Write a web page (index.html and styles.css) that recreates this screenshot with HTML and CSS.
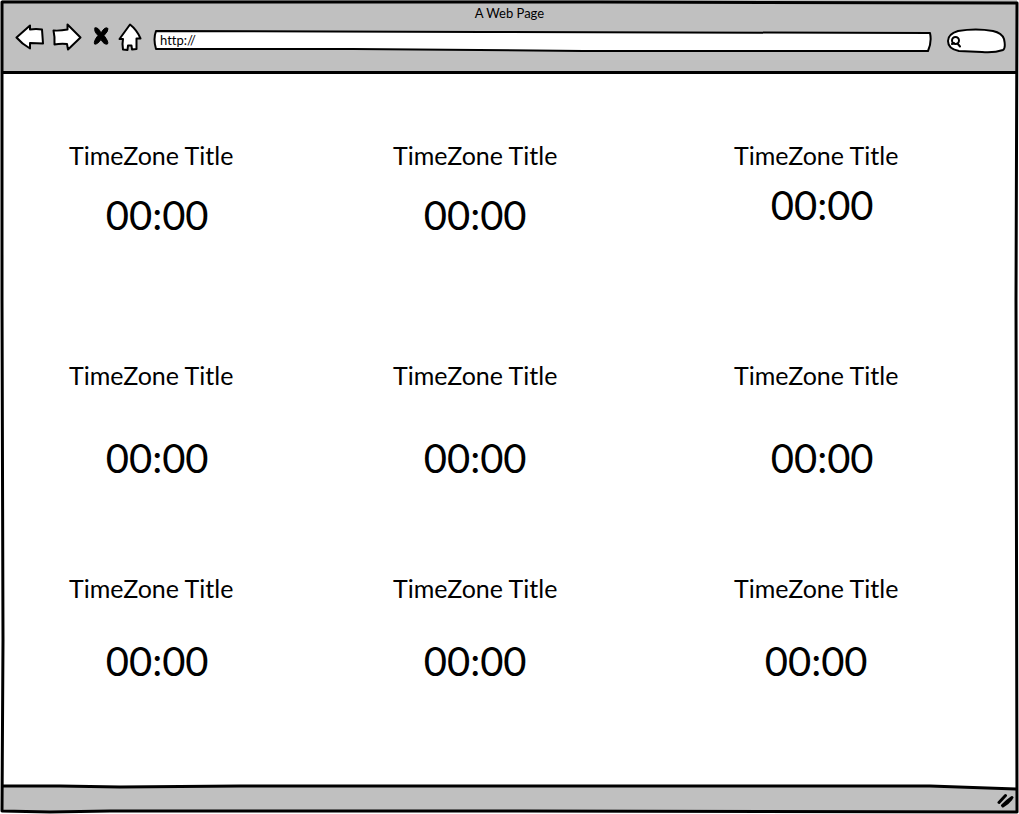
FILE: index.html
```html
<!DOCTYPE html>
<html lang="en">
<head>
<meta charset="utf-8">
<meta name="viewport" content="width=device-width, initial-scale=1">
<title>A Web Page</title>
<link rel="stylesheet" href="styles.css">
</head>
<body>
<div class="browser">
  <header class="chrome">
    <h1 class="chrome-title">A Web Page</h1>
    <div class="toolbar">
      <nav class="nav" aria-label="Browser">
        <button class="nav-button" type="button" aria-label="Back"><svg width="30" height="30" viewBox="0 0 30 30"><path d="M2.500 15.500 L16 3.500 L16 7.500 Q22 6.500 28 7.500 L29 21.500 L16 21 L16 26.500 Q8 22 2.500 15.500 Z"/></svg></button>
        <button class="nav-button nav-forward" type="button" aria-label="Forward"><svg width="30" height="30" viewBox="0 0 30 30"><path d="M1.500 8.500 Q8 9 15.500 7.500 L15.500 2.500 L28.500 15.500 L16 27.500 L15 22 Q8 21.500 2.500 22.500 Q3 15 1.500 8.500 Z"/></svg></button>
        <button class="nav-button nav-stop" type="button" aria-label="Stop"><svg width="18" height="30" viewBox="0 0 18 30"><path class="stop-shape" d="M3 6 Q6 4.500 9 11 Q13 4 16 6.500 Q16.500 9 12 13.500 Q17 20 15.500 22 Q12 23 9 17.500 Q5 23 2.500 22 Q1.500 19 6 13.500 Q1.500 9 3 6 Z"/></svg></button>
        <button class="nav-button nav-home" type="button" aria-label="Home"><svg width="24" height="30" viewBox="0 0 24 30"><path d="M12 2.500 L1.500 17 L5 17 Q4 22 5 27.500 L9.500 28 L10 23.500 L13.500 23.500 L14 27.500 L18.500 27 L18.500 16.500 L22.500 16.500 Q19 8 12 2.500 Z"/></svg></button>
      </nav>
      <div class="address">
        <svg class="outline" viewBox="0 0 778 24" preserveAspectRatio="none" aria-hidden="true"><path d="M3 2 L330 3 L776 4 Q778 13 774 22 L430 22 L200 20 L3 20 Q0 10 3 2 Z"/></svg>
        <input class="address-input" type="text" value="http://" aria-label="Address">
      </div>
      <div class="search">
        <svg class="outline" viewBox="0 0 60 26" preserveAspectRatio="none" aria-hidden="true"><path d="M12 3 Q30 0 47 3 Q56 5 58 11 Q60 20 57 22 Q48 25 36 24 L13 23 Q2 21 2 13 Q2 6 12 3 Z"/></svg>
        <svg class="search-icon" width="12" height="14" viewBox="0 0 12 14" aria-hidden="true"><circle cx="5.500" cy="5.500" r="3.500"/><path d="M2 9 L4 8 M7.500 8.500 L10 11.500"/></svg>
        <input class="search-input" type="search" aria-label="Search">
      </div>
    </div>
  </header>
  <main class="zones">
    <section class="zone"><h2 class="zone-title">TimeZone Title</h2><time class="clock clock-offset">00:00</time></section>
    <section class="zone"><h2 class="zone-title">TimeZone Title</h2><time class="clock">00:00</time></section>
    <section class="zone zone-compact"><h2 class="zone-title">TimeZone Title</h2><time class="clock clock-offset">00:00</time></section>
    <section class="zone zone-tall"><h2 class="zone-title">TimeZone Title</h2><time class="clock clock-offset">00:00</time></section>
    <section class="zone zone-tall"><h2 class="zone-title">TimeZone Title</h2><time class="clock">00:00</time></section>
    <section class="zone zone-tall"><h2 class="zone-title">TimeZone Title</h2><time class="clock clock-offset">00:00</time></section>
    <section class="zone zone-medium"><h2 class="zone-title">TimeZone Title</h2><time class="clock clock-offset">00:00</time></section>
    <section class="zone zone-medium"><h2 class="zone-title">TimeZone Title</h2><time class="clock">00:00</time></section>
    <section class="zone zone-medium"><h2 class="zone-title">TimeZone Title</h2><time class="clock">00:00</time></section>
  </main>
  <footer class="status">
    <svg class="status-shape" viewBox="0 0 1019 30" preserveAspectRatio="none" aria-hidden="true"><path class="status-fill" d="M3 2 L930 2 L1016 5 L1016 28 L3 28 Z"/><path d="M3 2 L60 2 L120 3 L240 2 L930 2 L1016 5"/></svg>
    <svg class="grip" width="18" height="16" viewBox="0 0 18 16" aria-hidden="true"><path d="M2 9.500 L8.500 2.500 M5.500 12.500 Q10 8 15 4.500 M6 13 Q10 11 14 6"/></svg>
  </footer>
  <svg class="frame" viewBox="0 0 1019 814" preserveAspectRatio="none" aria-hidden="true"><path d="M2 2 L600 2 L1017 3 L1016 300 L1017 812 L520 811 L110 811 L50 812 L2 811 L3 640 L2 300 Z"/></svg>
</div>
</body>
</html>
```

FILE: styles.css
```css
* { box-sizing: border-box; }

body {
  margin: 0;
  background: #fff;
  color: #000;
  font-family: Lato, "Open Sans", sans-serif;
  font-variant-ligatures: none;
}

svg {
  display: block;
  fill: #fff;
  stroke: #000;
  stroke-width: 2px;
  stroke-linecap: round;
  stroke-linejoin: round;
}

.browser {
  position: relative;
  display: flex;
  flex-direction: column;
  min-height: 100vh;
}

.frame {
  position: absolute;
  inset: 0;
  width: 100%;
  height: 100%;
  pointer-events: none;
}

.frame path,
.status-shape path,
.outline path {
  vector-effect: non-scaling-stroke;
}

.frame path { fill: none; stroke-width: 3px; }

.chrome {
  height: 74px;
  margin: 0 2px;
  padding-top: 5px;
  background: #c0c0c0;
  border-bottom: 3px solid #000;
}

.chrome-title {
  margin: 0;
  font-size: 13px;
  line-height: 17px;
  font-weight: 400;
  text-align: center;
}

.toolbar {
  display: flex;
  align-items: flex-start;
  padding: 0 11px 0 12px;
}

.nav { display: flex; margin-right: 11px; }

.nav-button {
  padding: 0;
  border: 0;
  background: none;
}

.nav-forward { margin-left: 8px; }
.nav-stop { margin-left: 10px; }
.nav-home { margin-left: 8px; }
.stop-shape { fill: #000; stroke-width: 1px; }

.address {
  position: relative;
  flex: 1;
  height: 24px;
  margin: 7px 14px 0 0;
}

.search {
  position: relative;
  width: 60px;
  height: 26px;
  margin-top: 6px;
}

.outline {
  position: absolute;
  inset: 0;
  width: 100%;
  height: 100%;
}

.address-input,
.search-input {
  position: relative;
  display: block;
  width: 100%;
  height: 100%;
  padding: 0 7px 2px;
  border: 0;
  outline: 0;
  background: none;
  color: inherit;
  font: 13px Lato, sans-serif;
  font-variant-ligatures: none;
}

.search-input { padding-left: 16px; }

.search-icon {
  position: absolute;
  left: 4px;
  top: 7px;
}

.zones {
  flex: 1;
  display: grid;
  grid-template-columns: 324fr 341fr 285fr;
  grid-template-rows: 220fr 214fr 212fr;
  padding: 65px 0 0 69px;
}

.zone {
  display: flex;
  flex-direction: column;
  align-items: center;
  justify-self: start;
  gap: 20px;
}

.zone-compact { gap: 10px; }
.zone-tall { gap: 43px; }
.zone-medium { gap: 33px; }

.zone-title {
  margin: 0;
  font-size: 25px;
  line-height: 32px;
  font-weight: 400;
}

.clock {
  font-size: 40px;
  line-height: 48px;
}

.clock-offset { padding-left: 12px; }

.status {
  position: relative;
  display: flex;
  justify-content: flex-end;
  height: 30px;
  padding: 9px 4px 0 0;
}

.status-shape {
  position: absolute;
  inset: 0;
  width: 100%;
  height: 100%;
}

.status-shape path { fill: none; stroke-width: 3px; }
.status-shape .status-fill { fill: #c0c0c0; stroke: none; }

.grip { position: relative; stroke-width: 3px; fill: none; }
```
